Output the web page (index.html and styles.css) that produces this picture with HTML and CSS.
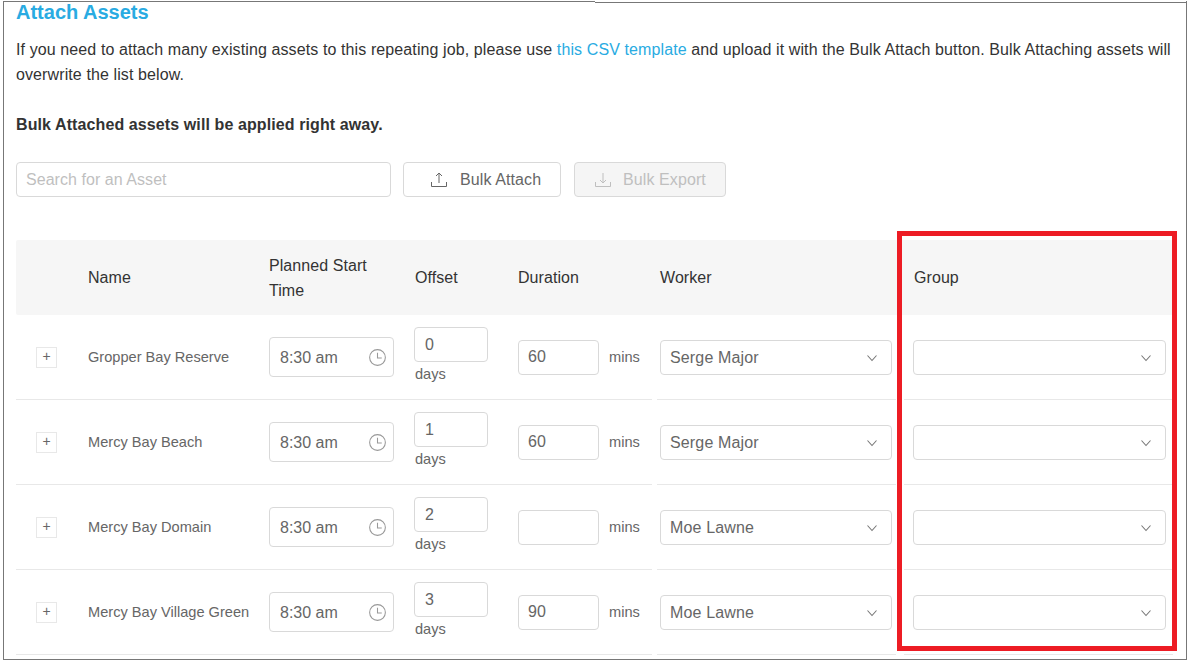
FILE: index.html
```html
<!DOCTYPE html>
<html>
<head>
<meta charset="utf-8">
<title>Attach Assets</title>
<link rel="stylesheet" href="styles.css">
</head>
<body>
<svg class="defs" width="0" height="0">
	<symbol id="i-clock" viewBox="0 0 16 16"><circle cx="8" cy="8" r="7.4" fill="none" stroke="currentColor"/><path d="M8 3.6V8.5H12" fill="none" stroke="currentColor"/></symbol>
	<symbol id="i-down" viewBox="0 0 12 12"><path d="M1.500 3.500L6 8.500L10.500 3.500" fill="none" stroke="currentColor" stroke-width="1.100"/></symbol>
	<symbol id="i-upload" viewBox="0 0 16 16"><path d="M8 1V11M5 4L8 1L11 4M.5 10V14.500H15.500V10" fill="none" stroke="currentColor"/></symbol>
	<symbol id="i-download" viewBox="0 0 16 16"><path d="M8 1V11M5 8L8 11L11 8M.5 10V14.500H15.500V10" fill="none" stroke="currentColor"/></symbol>
</svg>
<div class="frame">
	<h2 class="title">Attach Assets</h2>
	<p class="intro">If you need to attach many existing assets to this repeating job, please use <a href="#">this CSV template</a> and upload it with the Bulk Attach button. Bulk Attaching assets will overwrite the list below.</p>
	<p class="notice">Bulk Attached assets will be applied right away.</p>

	<div class="toolbar">
		<div class="field search">Search for an Asset</div>
		<div class="btn"><svg class="btn_icon"><use href="#i-upload"/></svg>Bulk Attach</div>
		<div class="btn disabled"><svg class="btn_icon"><use href="#i-download"/></svg>Bulk Export</div>
	</div>

	<div class="assets">
		<div class="grid head">
			<div></div>
			<div>Name</div>
			<div>Planned Start<br>Time</div>
			<div>Offset</div>
			<div>Duration</div>
			<div class="head_worker">Worker</div>
			<div class="head_group">Group</div>
		</div>

		<div class="grid row">
			<div class="cell"><span class="expand">+</span></div>
			<div class="cell">Gropper Bay Reserve</div>
			<div class="cell"><div class="field time">8:30 am<svg class="clock"><use href="#i-clock"/></svg></div></div>
			<div class="cell offset"><div class="field days">0</div><span class="days_label">days</span></div>
			<div class="cell"><div class="field mins">60</div><span class="mins_label">mins</span></div>
			<div class="cell worker"><div class="field select worker_select">Serge Major<svg class="chevron"><use href="#i-down"/></svg></div></div>
			<div class="cell group"><div class="field select group_select"><svg class="chevron"><use href="#i-down"/></svg></div></div>
		</div>

		<div class="grid row">
			<div class="cell"><span class="expand">+</span></div>
			<div class="cell">Mercy Bay Beach</div>
			<div class="cell"><div class="field time">8:30 am<svg class="clock"><use href="#i-clock"/></svg></div></div>
			<div class="cell offset"><div class="field days">1</div><span class="days_label">days</span></div>
			<div class="cell"><div class="field mins">60</div><span class="mins_label">mins</span></div>
			<div class="cell worker"><div class="field select worker_select">Serge Major<svg class="chevron"><use href="#i-down"/></svg></div></div>
			<div class="cell group"><div class="field select group_select"><svg class="chevron"><use href="#i-down"/></svg></div></div>
		</div>

		<div class="grid row">
			<div class="cell"><span class="expand">+</span></div>
			<div class="cell">Mercy Bay Domain</div>
			<div class="cell"><div class="field time">8:30 am<svg class="clock"><use href="#i-clock"/></svg></div></div>
			<div class="cell offset"><div class="field days">2</div><span class="days_label">days</span></div>
			<div class="cell"><div class="field mins"></div><span class="mins_label">mins</span></div>
			<div class="cell worker"><div class="field select worker_select">Moe Lawne<svg class="chevron"><use href="#i-down"/></svg></div></div>
			<div class="cell group"><div class="field select group_select"><svg class="chevron"><use href="#i-down"/></svg></div></div>
		</div>

		<div class="grid row">
			<div class="cell"><span class="expand">+</span></div>
			<div class="cell">Mercy Bay Village Green</div>
			<div class="cell"><div class="field time">8:30 am<svg class="clock"><use href="#i-clock"/></svg></div></div>
			<div class="cell offset"><div class="field days">3</div><span class="days_label">days</span></div>
			<div class="cell"><div class="field mins">90</div><span class="mins_label">mins</span></div>
			<div class="cell worker"><div class="field select worker_select">Moe Lawne<svg class="chevron"><use href="#i-down"/></svg></div></div>
			<div class="cell group"><div class="field select group_select"><svg class="chevron"><use href="#i-down"/></svg></div></div>
		</div>
	</div>

	<div class="highlight"></div>
</div>
</body>
</html>
```

FILE: styles.css
```css
html, body {
	margin: 0;
	padding: 0;
	height: 662px;
	overflow: hidden;
	background: #fff;
}

.defs {
	position: absolute;
}

.frame {
	position: relative;
	box-sizing: border-box;
	width: 1184px;
	height: 659px;
	margin: 1px 0 0 3px;
	padding: 1px 13px 0 12px;
	border: 1px solid #777;
	border-top: 0;
	overflow: hidden;
	font-family: "Liberation Sans", Arial, sans-serif;
	font-size: 16px;
	color: #333;
}

/* the top edge steps down a pixel part way along */
.frame::before, .frame::after {
	content: "";
	position: absolute;
	height: 1px;
	background: #777;
}

.frame::before {
	left: 0;
	top: 0;
	width: 591px;
}

.frame::after {
	left: 591px;
	right: 0;
	top: 1px;
}

.title {
	margin: 0;
	font-size: 20px;
	line-height: 20px;
	font-weight: bold;
	color: #29abe2;
}

.intro {
	margin: 15px 0 0;
	line-height: 25px;
	letter-spacing: 0.105px;
}

.intro a {
	color: #29abe2;
	text-decoration: none;
}

.notice {
	margin: 25px 0 0;
	line-height: 25px;
	font-weight: bold;
	letter-spacing: 0.1px;
}

.toolbar {
	display: flex;
	margin-top: 25px;
}

.field {
	display: flex;
	align-items: center;
	box-sizing: border-box;
	height: 35px;
	padding: 0 9px;
	border: 1px solid #d9d9d9;
	border-radius: 4px;
	background: #fff;
	font-size: 16px;
	color: #666;
}

.search {
	width: 375px;
	color: #bfbfbf;
	letter-spacing: 0.05px;
}

.btn {
	display: flex;
	align-items: center;
	box-sizing: border-box;
	width: 158px;
	height: 35px;
	margin-left: 12px;
	padding-left: 27px;
	border: 1px solid #d9d9d9;
	border-radius: 4px;
	color: #666;
	letter-spacing: 0.1px;
}

.btn.disabled {
	width: 152px;
	margin-left: 13px;
	padding-left: 20px;
	background: #f5f5f5;
	color: #bfbfbf;
}

.btn.disabled .btn_icon {
	margin-right: 12px;
}

.btn_icon {
	width: 16px;
	height: 16px;
	margin-right: 13px;
}

.assets {
	margin-top: 43px;
}

.grid {
	display: grid;
	grid-template-columns: 72px 181px 146px 103px 134px 244px 1fr;
}

.head {
	align-items: center;
	height: 75px;
	border-radius: 2px;
	background: #f6f6f6;
	line-height: 25px;
	letter-spacing: 0.07px;
	color: #333;
}

.head_worker {
	padding-left: 8px;
}

.head_group {
	padding-left: 18px;
}

.cell {
	display: flex;
	align-items: center;
	box-sizing: border-box;
	height: 85px;
	border-bottom: 1px solid #e8e8e8;
	font-size: 14.6px;
	color: #666;
}

.expand {
	box-sizing: border-box;
	width: 21px;
	height: 21px;
	margin-left: 20px;
	border: 1px solid #e8e8e8;
	font-size: 14px;
	line-height: 17px;
	text-align: center;
}

.time {
	position: relative;
	width: 125px;
	height: 40px;
	padding: 1px 0 0 10px;
}

.clock {
	position: absolute;
	right: 7px;
	top: 11px;
	width: 17px;
	height: 17px;
	color: #999;
}

.offset {
	flex-direction: column;
	align-items: flex-start;
	justify-content: center;
}

.days {
	width: 74px;
	padding: 1px 0 0 10px;
	margin-left: -1px;
}

.days_label {
	margin: -1px 0 1px;
	line-height: 26px;
}

.mins {
	width: 81px;
}

.mins_label {
	margin-left: 10px;
}

.select {
	position: relative;
	padding-top: 1px;
	letter-spacing: 0.15px;
}

.worker {
	margin-left: 5px;
	padding-left: 3px;
}

.worker_select {
	width: 232px;
}

.group {
	margin-left: 8px;
	padding-left: 9px;
}

.group_select {
	width: 253px;
}

.chevron {
	position: absolute;
	right: 13px;
	top: 11px;
	width: 12px;
	height: 12px;
	color: #777;
}

/* annotation drawn over the Group column */
.highlight {
	position: absolute;
	left: 893px;
	top: 230px;
	box-sizing: border-box;
	width: 280px;
	height: 420px;
	border: 5px solid #ed1c24;
}
```
